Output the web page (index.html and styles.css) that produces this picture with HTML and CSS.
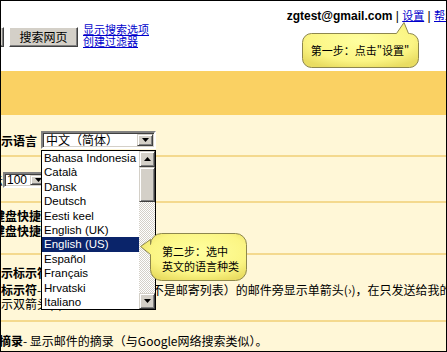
FILE: index.html
```html
<!DOCTYPE html>
<html lang="zh-CN">
<head>
    <meta charset="UTF-8">
    <meta name="viewport" content="width=device-width, initial-scale=1.0">
    <title>Gmail 设置</title>
    <link rel="stylesheet" href="styles.css">
</head>
<body>
    <div class="page">
        <div class="top">
            <div class="account"><b class="email">zgtest@gmail.com</b> | <a href="#" class="toplink">设置</a> | <a href="#" class="toplink">帮助</a></div>
            <div class="search">
                <button class="btn btn-cut">搜索邮件</button>
                <button class="btn btn-web">搜索网页</button>
                <div class="links">
                    <a href="#">显示搜索选项</a>
                    <a href="#">创建过滤器</a>
                </div>
            </div>
        </div>

        <div class="bar"></div>

        <div class="settings">
            <div class="row row-lang">
                <div class="line">
                    <b class="lang-label">显示语言</b>
                    <div class="select select-lang">
                        <span class="value">中文（简体）</span>
                        <span class="drop"><svg width="7" height="4"><polygon points="0,0 7,0 3.5,4"/></svg></span>
                    </div>
                </div>
            </div>

            <div class="row row-size">
                <div class="line">
                    <span class="size-label">显示</span>
                    <div class="select select-size">
                        <span class="value">100</span>
                        <span class="drop"><svg width="7" height="4"><polygon points="0,0 7,0 3.5,4"/></svg></span>
                    </div>
                </div>
            </div>

            <div class="row row-keys">
                <div class="line keys"><b>键盘快捷键</b></div>
                <div class="line keys"><b>键盘快捷键</b></div>
            </div>

            <div class="row row-mark">
                <div class="line mark-a"><b>显示标示符</b></div>
                <div class="line mark-b"><b>显示标示符</b> - 在发送至我的地址（不是邮寄列表）的邮件旁显示单箭头(›)，在只发送给我的邮件旁</div>
                <div class="line mark-c">显示双箭头(»)。</div>
            </div>

            <div class="row row-snip">
                <div class="line snip"><b>显示摘录</b> - 显示邮件的摘录（与Google网络搜索类似）。</div>
            </div>
        </div>

        <!-- open dropdown of the language select -->
        <div class="langlist">
            <div class="items">
                <div class="item">Bahasa Indonesia</div>
                <div class="item">Català</div>
                <div class="item">Dansk</div>
                <div class="item">Deutsch</div>
                <div class="item">Eesti keel</div>
                <div class="item">English (UK)</div>
                <div class="item selected">English (US)</div>
                <div class="item">Español</div>
                <div class="item">Français</div>
                <div class="item">Hrvatski</div>
                <div class="item">Italiano</div>
            </div>
            <div class="sbar">
                <div class="sbtn"><svg width="7" height="4"><polygon points="3.5,0 7,4 0,4"/></svg></div>
                <div class="thumb"></div>
                <div class="track"></div>
                <div class="sbtn"><svg width="7" height="4"><polygon points="0,0 7,0 3.5,4"/></svg></div>
            </div>
        </div>

        <div class="tip tip-one">
            <svg class="balloon" width="120" height="50">
                <defs>
                    <radialGradient id="fillOne" cx="50%" cy="40%" r="65%">
                        <stop offset="0" stop-color="#ffffa0"/>
                        <stop offset="0.7" stop-color="#fbf584"/>
                        <stop offset="1" stop-color="#e9dd62"/>
                    </radialGradient>
                </defs>
                <path d="M11.5 13.5 H96.5 L104 2.5 L108.5 13.5 H109.5 A9 9 0 0 1 118.5 22.5 V38.5 A9 9 0 0 1 109.5 47.5 H11.5 A9 9 0 0 1 2.5 38.5 V22.5 A9 9 0 0 1 11.5 13.5 Z" fill="url(#fillOne)" stroke="#8d874e"/>
            </svg>
            <div class="tip-text">第一步：点击"设置"</div>
        </div>

        <div class="tip tip-two">
            <svg class="balloon" width="110" height="52">
                <defs>
                    <radialGradient id="fillTwo" cx="55%" cy="40%" r="65%">
                        <stop offset="0" stop-color="#ffffa0"/>
                        <stop offset="0.7" stop-color="#fbf584"/>
                        <stop offset="1" stop-color="#e9dd62"/>
                    </radialGradient>
                </defs>
                <path d="M23.5 2.5 H97.5 A11 11 0 0 1 108.5 13.5 V38.5 A11 11 0 0 1 97.5 49.5 H23.5 A11 11 0 0 1 12.5 38.5 V23.5 L2.5 15.5 L12.5 8.5 V13.5 A11 11 0 0 1 23.5 2.5 Z" fill="url(#fillTwo)" stroke="#8d874e"/>
            </svg>
            <div class="tip-text">第二步：选中<br>英文的语言种类</div>
        </div>
    </div>
</body>
</html>
```

FILE: styles.css
```css
* {
    box-sizing: border-box;
}

body {
    margin: 0;
    font-family: "Noto Sans CJK SC", sans-serif;
    font-size: 12px;
    color: #000;
}

.page {
    position: relative;
    width: 447px;
    height: 352px;
    border: 1px solid #000;
    overflow: hidden;
    background: #fff7d7;
}

/* top white area */
.top {
    height: 70px;
    background: #fff;
}

.account {
    height: 22px;
    padding-top: 6px;
    margin-right: -10px;
    line-height: 16px;
    text-align: right;
    white-space: nowrap;
    font-family: "Liberation Sans", "Noto Sans CJK SC", sans-serif;
    font-size: 12px;
}

.account .toplink {
    font-family: "Noto Sans CJK SC", sans-serif;
    font-size: 11px;
    color: #0000cc;
}

.search {
    display: flex;
    align-items: flex-end;
    gap: 5px;
}

.btn {
    height: 20px;
    padding: 0;
    font-family: inherit;
    font-size: 12px;
    line-height: 16px;
    background: #d4d0c8;
    border: 1px solid;
    border-color: #fff #404040 #404040 #fff;
    box-shadow: inset -1px -1px #808080;
    white-space: nowrap;
    overflow: hidden;
}

.btn-cut {
    width: 60px;
    margin-left: -57px;
}

.btn-web {
    width: 69px;
}

.links {
    display: flex;
    flex-direction: column;
    font-size: 11px;
    line-height: 12px;
}

.links a {
    color: #0000cc;
}

.bar {
    height: 44px;
    background: #fad163;
}

/* settings rows */
.row {
    border-bottom: 2px solid #f4d98e;
}

.line {
    display: flex;
    align-items: center;
    white-space: nowrap;
}

.row-lang {
    padding: 16px 0 6px;
}

.row-lang .line {
    height: 18px;
}

.lang-label {
    margin-left: -12px;
    margin-right: 4px;
}

.row-size {
    padding: 15px 0 13px;
}

.row-size .line {
    height: 16px;
}

.size-label {
    margin-left: -22px;
}

.row-keys {
    padding: 5px 0 15px;
}

.keys {
    height: 15px;
    margin-left: -8px;
}

.row-mark {
    padding: 8px 0 10px;
}

.mark-a {
    height: 18px;
    margin-left: -12px;
}

.mark-b {
    height: 16px;
    margin-left: -24px;
}

.mark-c {
    height: 13px;
    margin-left: -12px;
}

.row-snip {
    padding-top: 11px;
    border-bottom: none;
}

.snip {
    height: 14px;
    margin-left: -26px;
}

/* windows classic select */
.select {
    display: flex;
    border: 2px solid;
    border-color: #808080 #fff #fff #808080;
    box-shadow: inset 1px 1px #404040, inset -1px -1px #d4d0c8;
    background: #fff;
}

.select .value {
    flex: 1;
    padding-left: 3px;
    line-height: 14px;
}

.select .drop {
    width: 16px;
    display: flex;
    align-items: center;
    justify-content: center;
    margin: 1px;
    background: #d4d0c8;
    border: 1px solid;
    border-color: #d4d0c8 #404040 #404040 #d4d0c8;
    box-shadow: inset 1px 1px #fff, inset -1px -1px #808080;
}

.select-lang {
    width: 115px;
    height: 18px;
}

.select-size {
    width: 46px;
    height: 16px;
    font-family: "Liberation Sans", sans-serif;
}

.select-size .value {
    line-height: 12px;
    padding-left: 2px;
}

/* open list */
.langlist {
    position: absolute;
    left: 40px;
    top: 149px;
    width: 115px;
    display: flex;
    border: 1px solid #000;
    background: #fff;
    z-index: 2;
}

.items {
    flex: 1;
    font-family: "Liberation Sans", sans-serif;
    font-size: 11.5px;
}

.item {
    height: 14.4px;
    line-height: 14.4px;
    padding-left: 2px;
    white-space: nowrap;
}

.item.selected {
    background: #0a246a;
    color: #fff;
}

.sbar {
    width: 16px;
    display: flex;
    flex-direction: column;
}

.sbtn,
.thumb {
    background: #d4d0c8;
    border: 1px solid;
    border-color: #d4d0c8 #404040 #404040 #d4d0c8;
    box-shadow: inset 1px 1px #fff, inset -1px -1px #808080;
}

.sbtn {
    height: 16px;
    display: flex;
    align-items: center;
    justify-content: center;
}

.thumb {
    height: 35px;
}

.track {
    flex: 1;
    background: repeating-conic-gradient(#d4d0c8 0 25%, #fff 0 50%) 0 0 / 2px 2px;
}

/* balloons */
.tip {
    position: absolute;
    z-index: 3;
}

.balloon {
    display: block;
}

.tip-text {
    position: absolute;
    font-size: 11px;
    white-space: nowrap;
}

.tip-one {
    left: 299px;
    top: 19px;
}

.tip-one .tip-text {
    left: 2px;
    top: 13px;
    width: 116px;
    height: 34px;
    line-height: 34px;
    text-align: center;
}

.tip-two {
    left: 137px;
    top: 230px;
}

.tip-two .tip-text {
    left: 24px;
    top: 13px;
    line-height: 15px;
}
```
